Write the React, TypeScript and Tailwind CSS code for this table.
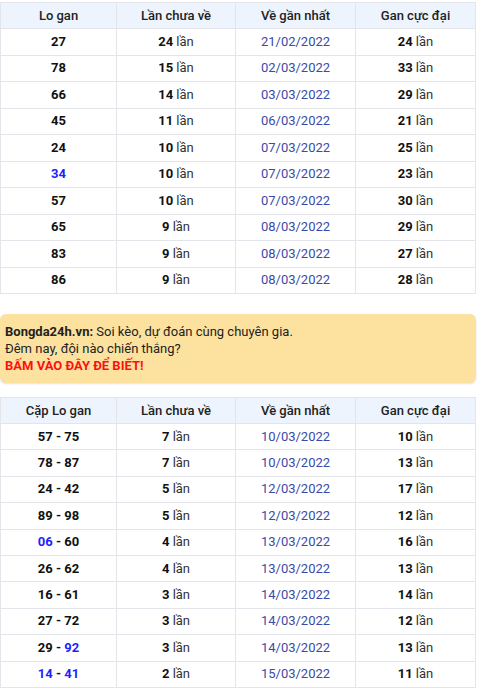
const table1 = [
  { lo: '27', chua: 24, ve: '21/02/2022', max: 24 },
  { lo: '78', chua: 15, ve: '02/03/2022', max: 33 },
  { lo: '66', chua: 14, ve: '03/03/2022', max: 29 },
  { lo: '45', chua: 11, ve: '06/03/2022', max: 21 },
  { lo: '24', chua: 10, ve: '07/03/2022', max: 25 },
  { lo: '34', chua: 10, ve: '07/03/2022', max: 23, blue: true },
  { lo: '57', chua: 10, ve: '07/03/2022', max: 30 },
  { lo: '65', chua: 9, ve: '08/03/2022', max: 29 },
  { lo: '83', chua: 9, ve: '08/03/2022', max: 27 },
  { lo: '86', chua: 9, ve: '08/03/2022', max: 28 },
];

// a, b: pair; which half is blue
const table2 = [
  { a: '57', b: '75', chua: 7, ve: '10/03/2022', max: 10 },
  { a: '78', b: '87', chua: 7, ve: '10/03/2022', max: 13 },
  { a: '24', b: '42', chua: 5, ve: '12/03/2022', max: 17 },
  { a: '89', b: '98', chua: 5, ve: '12/03/2022', max: 12 },
  { a: '06', b: '60', chua: 4, ve: '13/03/2022', max: 16, blueA: true },
  { a: '26', b: '62', chua: 4, ve: '13/03/2022', max: 13 },
  { a: '16', b: '61', chua: 3, ve: '14/03/2022', max: 14 },
  { a: '27', b: '72', chua: 3, ve: '14/03/2022', max: 12 },
  { a: '29', b: '92', chua: 3, ve: '14/03/2022', max: 13, blueB: true },
  { a: '14', b: '41', chua: 2, ve: '15/03/2022', max: 11, blueA: true, blueB: true },
];

const cell = 'border border-[#e3e5ea] text-center align-middle p-0';

function Header({ first }: { first: string }) {
  return (
    <thead>
      <tr className="h-[26px] bg-[#edf4fd] text-[#222]">
        <th className={`${cell} w-[116px] font-medium`}>{first}</th>
        <th className={`${cell} w-[119px] font-medium`}>Lần chưa về</th>
        <th className={`${cell} w-[120px] font-medium`}>Về gần nhất</th>
        <th className={`${cell} font-medium`}>Gan cực đại</th>
      </tr>
    </thead>
  );
}

function Lan({ n }: { n: number }) {
  return (
    <>
      <b className="font-bold text-[#111]">{n}</b> <span className="text-[#333]">lần</span>
    </>
  );
}

export default function App() {
  return (
    <div className="w-[480px] bg-white pt-[2px] text-[13px] text-[#222]" style={{ fontFamily: 'Roboto, "Noto Sans", sans-serif' }}>
      <table className="w-[476px] border-collapse table-fixed leading-[20px]">
        <Header first="Lo gan" />
        <tbody>
          {table1.map((r) => (
            <tr key={r.lo} className="h-[26.5px]">
              <td className={`${cell} font-bold ${r.blue ? 'text-[#1f1fff]' : 'text-[#111]'}`}>{r.lo}</td>
              <td className={cell}><Lan n={r.chua} /></td>
              <td className={`${cell} text-[#3a4aa8]`}>{r.ve}</td>
              <td className={cell}><Lan n={r.max} /></td>
            </tr>
          ))}
        </tbody>
      </table>

      <div className="mt-[20px] w-[476px] h-[69px] rounded-[6px] bg-[#fde29f] shadow-[0_1px_2px_rgba(0,0,0,0.12)] pl-[5px] pt-[9px] leading-[17px] text-[#222]">
        <div><b className="font-bold">Bongda24h.vn:</b> Soi kèo, dự đoán cùng chuyên gia.</div>
        <div>Đêm nay, đội nào chiến thắng?</div>
        <div className="font-bold text-[#ff1010]">BẤM VÀO ĐÂY ĐỂ BIẾT!</div>
      </div>

      <table className="mt-[14px] w-[476px] border-collapse table-fixed leading-[20px]">
        <Header first="Cặp Lo gan" />
        <tbody>
          {table2.map((r) => (
            <tr key={r.a + r.b} className="h-[26.4px]">
              <td className={`${cell} font-bold text-[#111]`}>
                <span className={r.blueA ? 'text-[#1f1fff]' : ''}>{r.a}</span>
                {' - '}
                <span className={r.blueB ? 'text-[#1f1fff]' : ''}>{r.b}</span>
              </td>
              <td className={cell}><Lan n={r.chua} /></td>
              <td className={`${cell} text-[#3a4aa8]`}>{r.ve}</td>
              <td className={cell}><Lan n={r.max} /></td>
            </tr>
          ))}
        </tbody>
      </table>
    </div>
  );
}
